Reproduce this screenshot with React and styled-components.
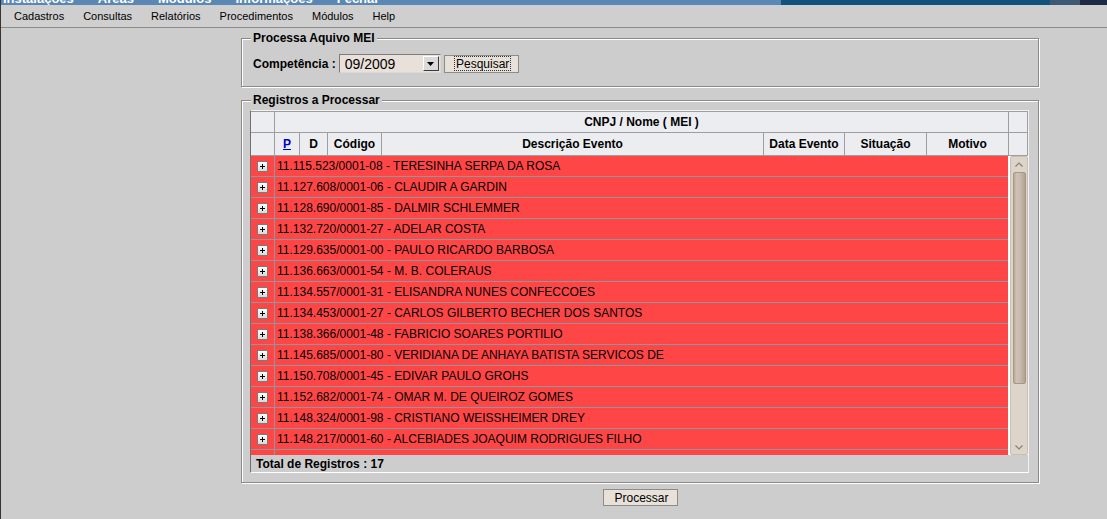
import React from 'react';
import styled, { createGlobalStyle } from 'styled-components';

const GlobalStyle = createGlobalStyle`
  html, body { margin: 0; padding: 0; background: #cdcdcd; }
  body { font-family: "Liberation Sans", Arial, sans-serif; font-size: 12px; color: #000; }
  * { box-sizing: border-box; }
`;

const Page = styled.div`
  width: 1107px;
  min-height: 519px;
  background: #cdcdcd;
  border-left: 1px solid #3a3430;
  display: flex;
  flex-direction: column;
  overflow: hidden;
`;

const TopStrip = styled.div`
  height: 5px;
  overflow: hidden;
  display: flex;
  align-items: flex-end;
  gap: 24px;
  padding-left: 2px;
  background: linear-gradient(to right, #5a87b3 0, #5a87b3 780px, #12527c 780px, #12527c 1049px, #3d5a74 1049px, #3d5a74 1079px, #1c2a48 1079px);
`;

const StripItem = styled.span`
  flex: none;
  color: #fff;
  font-weight: bold;
  font-size: 13px;
  line-height: 13px;
  white-space: nowrap;
`;

const MenuBar = styled.nav`
  height: 23px;
  display: flex;
  align-items: center;
  padding-left: 3.5px;
  background: #cfcfcf;
  border-bottom: 1px solid #8c8c8c;
`;

const MenuItem = styled.span`
  padding: 0 9.5px;
  font-size: 11px;
  color: #000;
`;

const Content = styled.main`
  width: 798px;
  margin-left: 240px;
  padding-top: 3px;
  display: flex;
  flex-direction: column;
`;

const Group = styled.fieldset`
  margin: ${p => p.$mt || 0}px 0 0 0;
  min-width: 0;
  border: 1px solid #8a8a8a;
  box-shadow: inset 1px 1px 0 #fff, 1px 1px 0 #fff;
  padding: ${p => p.$pad};
`;

const Legend = styled.legend`
  margin-left: ${p => p.$ml}px;
  padding: 0 2px;
  font-weight: bold;
  font-size: 12px;
  line-height: 14px;
  background: #cdcdcd;
`;

const FilterRow = styled.div`
  display: flex;
  align-items: center;
  height: 19px;
`;

const Label = styled.label`
  font-weight: bold;
  font-size: 12px;
  margin-right: 3px;
`;

const Select = styled.div`
  display: flex;
  align-items: center;
  justify-content: space-between;
  width: 102px;
  height: 19px;
  background: #e9e1d9;
  border: 1px solid;
  border-color: #7c7c7c #d8d8d8 #d8d8d8 #7c7c7c;
  padding: 0 1px 0 5px;
  font-size: 14px;
`;

const SelectArrow = styled.span`
  width: 16px;
  height: 15px;
  background: #dadada;
  border: 1px solid;
  border-color: #fff #3c3c3c #3c3c3c #fff;
  display: flex;
  align-items: center;
  justify-content: center;
`;

const Button = styled.button`
  height: ${p => p.$h || 18}px;
  margin: 0;
  margin-left: ${p => p.$ml || 0}px;
  padding: 0 ${p => p.$pr || 5}px 0 ${p => p.$pl || 8}px;
  background: #e8e1d9;
  border: 1px solid #8c8c8c;
  font-family: "Liberation Sans", Arial, sans-serif;
  font-size: 12px;
  color: #000;
  display: flex;
  align-items: center;
  justify-content: center;
  width: ${p => p.$w}px;
`;

const FocusRing = styled.span`
  border: 1px dotted #333;
  padding: 0 1px;
  height: 15px;
  display: flex;
  align-items: center;
`;

const GridBox = styled.div`
  display: flex;
  flex-direction: column;
  border: 1px solid;
  border-color: #f2f2f2 #f2f2f2 #fff #6f6f6f;
`;

const Header = styled.div`
  display: grid;
  grid-template-columns: 24px 25px 28px 54px 382px 81px 82px 82px 19px;
  grid-template-rows: 21px 23px;
  background: #ebedf0;
  border-top: 1px solid #9e9e9e;
`;

const HeadCell = styled.div`
  grid-column: ${p => p.$span || 'auto'};
  border-right: 1px solid #9e9e9e;
  border-bottom: 1px solid #9e9e9e;
  display: flex;
  align-items: center;
  justify-content: center;
  font-weight: bold;
  font-size: 12px;
  white-space: nowrap;
`;

const SortLink = styled.a`
  color: #0000cc;
  text-decoration: underline;
  font-weight: bold;
`;

const Body = styled.div`
  display: flex;
  height: 299px;
  background: #fff;
`;

const Rows = styled.div`
  width: 757px;
  overflow: hidden;
  flex: none;
`;

const Row = styled.div`
  display: grid;
  grid-template-columns: 24px 1fr;
  height: 21px;
  background: #ff4646;
  border-bottom: 1px solid #8d979c;
`;

const ExpandCell = styled.div`
  border-right: 1px solid #8d979c;
  display: flex;
  align-items: center;
  justify-content: center;
  padding-right: 1px;
`;

const RowText = styled.div`
  padding-left: 2px;
  display: flex;
  align-items: center;
  font-size: 12px;
  white-space: nowrap;
  overflow: hidden;
`;

const ScrollTrack = styled.div`
  width: 18px;
  margin-left: 2px;
  background: #ddd4ca;
  border: 1px solid #cabeb2;
  border-radius: 2px;
  display: flex;
  flex-direction: column;
  align-items: center;
`;

const ScrollArrow = styled.div`
  height: 14px;
  width: 100%;
  display: flex;
  align-items: center;
  justify-content: center;
  flex: none;
`;

const Thumb = styled.div`
  width: 13px;
  height: 212px;
  margin-top: 1px;
  border: 1px solid #a69888;
  border-radius: 2px;
  background: linear-gradient(to right, #b8a999 0, #d0c3b6 25%, #c6b8aa 60%, #b1a292 100%);
  flex: none;
`;

const Spacer = styled.div`
  flex: 1;
`;

const Footer = styled.div`
  height: 17px;
  display: flex;
  align-items: center;
  padding-left: 5px;
  font-weight: bold;
  font-size: 12px;
  background: #cdcdcd;
`;

const Actions = styled.div`
  display: flex;
  justify-content: center;
  margin-top: 6px;
`;

const PlusIcon = () => (
  <svg width="11" height="11" viewBox="0 0 11 11" shapeRendering="crispEdges">
    <defs>
      <linearGradient id="pg" x1="0" y1="0" x2="0" y2="1">
        <stop offset="0" stopColor="#ffffff" />
        <stop offset="1" stopColor="#d6d6d6" />
      </linearGradient>
    </defs>
    <rect x="0.5" y="0.5" width="10" height="10" fill="url(#pg)" stroke="#7a7a7a" />
    <line x1="3" y1="5.5" x2="8" y2="5.5" stroke="#000" />
    <line x1="5.5" y1="3" x2="5.5" y2="8" stroke="#000" />
  </svg>
);

const DownTriangle = () => (
  <svg width="7" height="4" viewBox="0 0 7 4">
    <polygon points="0,0 7,0 3.5,4" fill="#000" />
  </svg>
);

const Chevron = ({ up }) => (
  <svg width="8" height="5" viewBox="0 0 8 5">
    <polyline
      points={up ? '0.5,4.5 4,1 7.5,4.5' : '0.5,0.5 4,4 7.5,0.5'}
      fill="none"
      stroke="#8a7e72"
      strokeWidth="1.2"
    />
  </svg>
);

const records = [
  '11.115.523/0001-08 - TERESINHA SERPA DA ROSA',
  '11.127.608/0001-06 - CLAUDIR A GARDIN',
  '11.128.690/0001-85 - DALMIR SCHLEMMER',
  '11.132.720/0001-27 - ADELAR COSTA',
  '11.129.635/0001-00 - PAULO RICARDO BARBOSA',
  '11.136.663/0001-54 - M. B. COLERAUS',
  '11.134.557/0001-31 - ELISANDRA NUNES CONFECCOES',
  '11.134.453/0001-27 - CARLOS GILBERTO BECHER DOS SANTOS',
  '11.138.366/0001-48 - FABRICIO SOARES PORTILIO',
  '11.145.685/0001-80 - VERIDIANA DE ANHAYA BATISTA SERVICOS DE',
  '11.150.708/0001-45 - EDIVAR PAULO GROHS',
  '11.152.682/0001-74 - OMAR M. DE QUEIROZ GOMES',
  '11.148.324/0001-98 - CRISTIANO WEISSHEIMER DREY',
  '11.148.217/0001-60 - ALCEBIADES JOAQUIM RODRIGUES FILHO',
  '11.153.410/0001-12 - JOSE LUIZ DA SILVA',
  '11.155.902/0001-37 - MARIA HELENA SCHNEIDER',
  '11.157.266/0001-05 - ROBERTO CARLOS MULLER',
];

export default function App() {
  return (
    <>
      <GlobalStyle />
      <Page>
        <TopStrip>
          <StripItem>Instalações</StripItem>
          <StripItem>Áreas</StripItem>
          <StripItem>Módulos</StripItem>
          <StripItem>Informações</StripItem>
          <StripItem>Fechar</StripItem>
        </TopStrip>
        <MenuBar>
          <MenuItem>Cadastros</MenuItem>
          <MenuItem>Consultas</MenuItem>
          <MenuItem>Relatórios</MenuItem>
          <MenuItem>Procedimentos</MenuItem>
          <MenuItem>Módulos</MenuItem>
          <MenuItem>Help</MenuItem>
        </MenuBar>
        <Content>
          <Group $pad="9px 0 13px 11px">
            <Legend $ml={-2}>Processa Aquivo MEI</Legend>
            <FilterRow>
              <Label>Competência :</Label>
              <Select>
                <span>09/2009</span>
                <SelectArrow><DownTriangle /></SelectArrow>
              </Select>
              <Button $ml={3} $w={75} $h={18}>
                <FocusRing>Pesquisar</FocusRing>
              </Button>
            </FilterRow>
          </Group>
          <Group $mt={6} $pad="3px 9px 9px 8px">
            <Legend $ml={1}>Registros a Processar</Legend>
            <GridBox>
              <Header>
                <HeadCell />
                <HeadCell $span="2 / 9">CNPJ / Nome ( MEI )</HeadCell>
                <HeadCell />
                <HeadCell />
                <HeadCell><SortLink>P</SortLink></HeadCell>
                <HeadCell>D</HeadCell>
                <HeadCell>Código</HeadCell>
                <HeadCell>Descrição Evento</HeadCell>
                <HeadCell>Data Evento</HeadCell>
                <HeadCell>Situação</HeadCell>
                <HeadCell>Motivo</HeadCell>
                <HeadCell />
              </Header>
              <Body>
                <Rows>
                  {records.map(r => (
                    <Row key={r}>
                      <ExpandCell><PlusIcon /></ExpandCell>
                      <RowText>{r}</RowText>
                    </Row>
                  ))}
                </Rows>
                <ScrollTrack>
                  <ScrollArrow><Chevron up /></ScrollArrow>
                  <Thumb />
                  <Spacer />
                  <ScrollArrow><Chevron /></ScrollArrow>
                </ScrollTrack>
              </Body>
              <Footer>Total de Registros : 17</Footer>
            </GridBox>
          </Group>
          <Actions>
            <Button $w={75} $h={17} $pl={0} $pr={0}>Processar</Button>
          </Actions>
        </Content>
      </Page>
    </>
  );
}
